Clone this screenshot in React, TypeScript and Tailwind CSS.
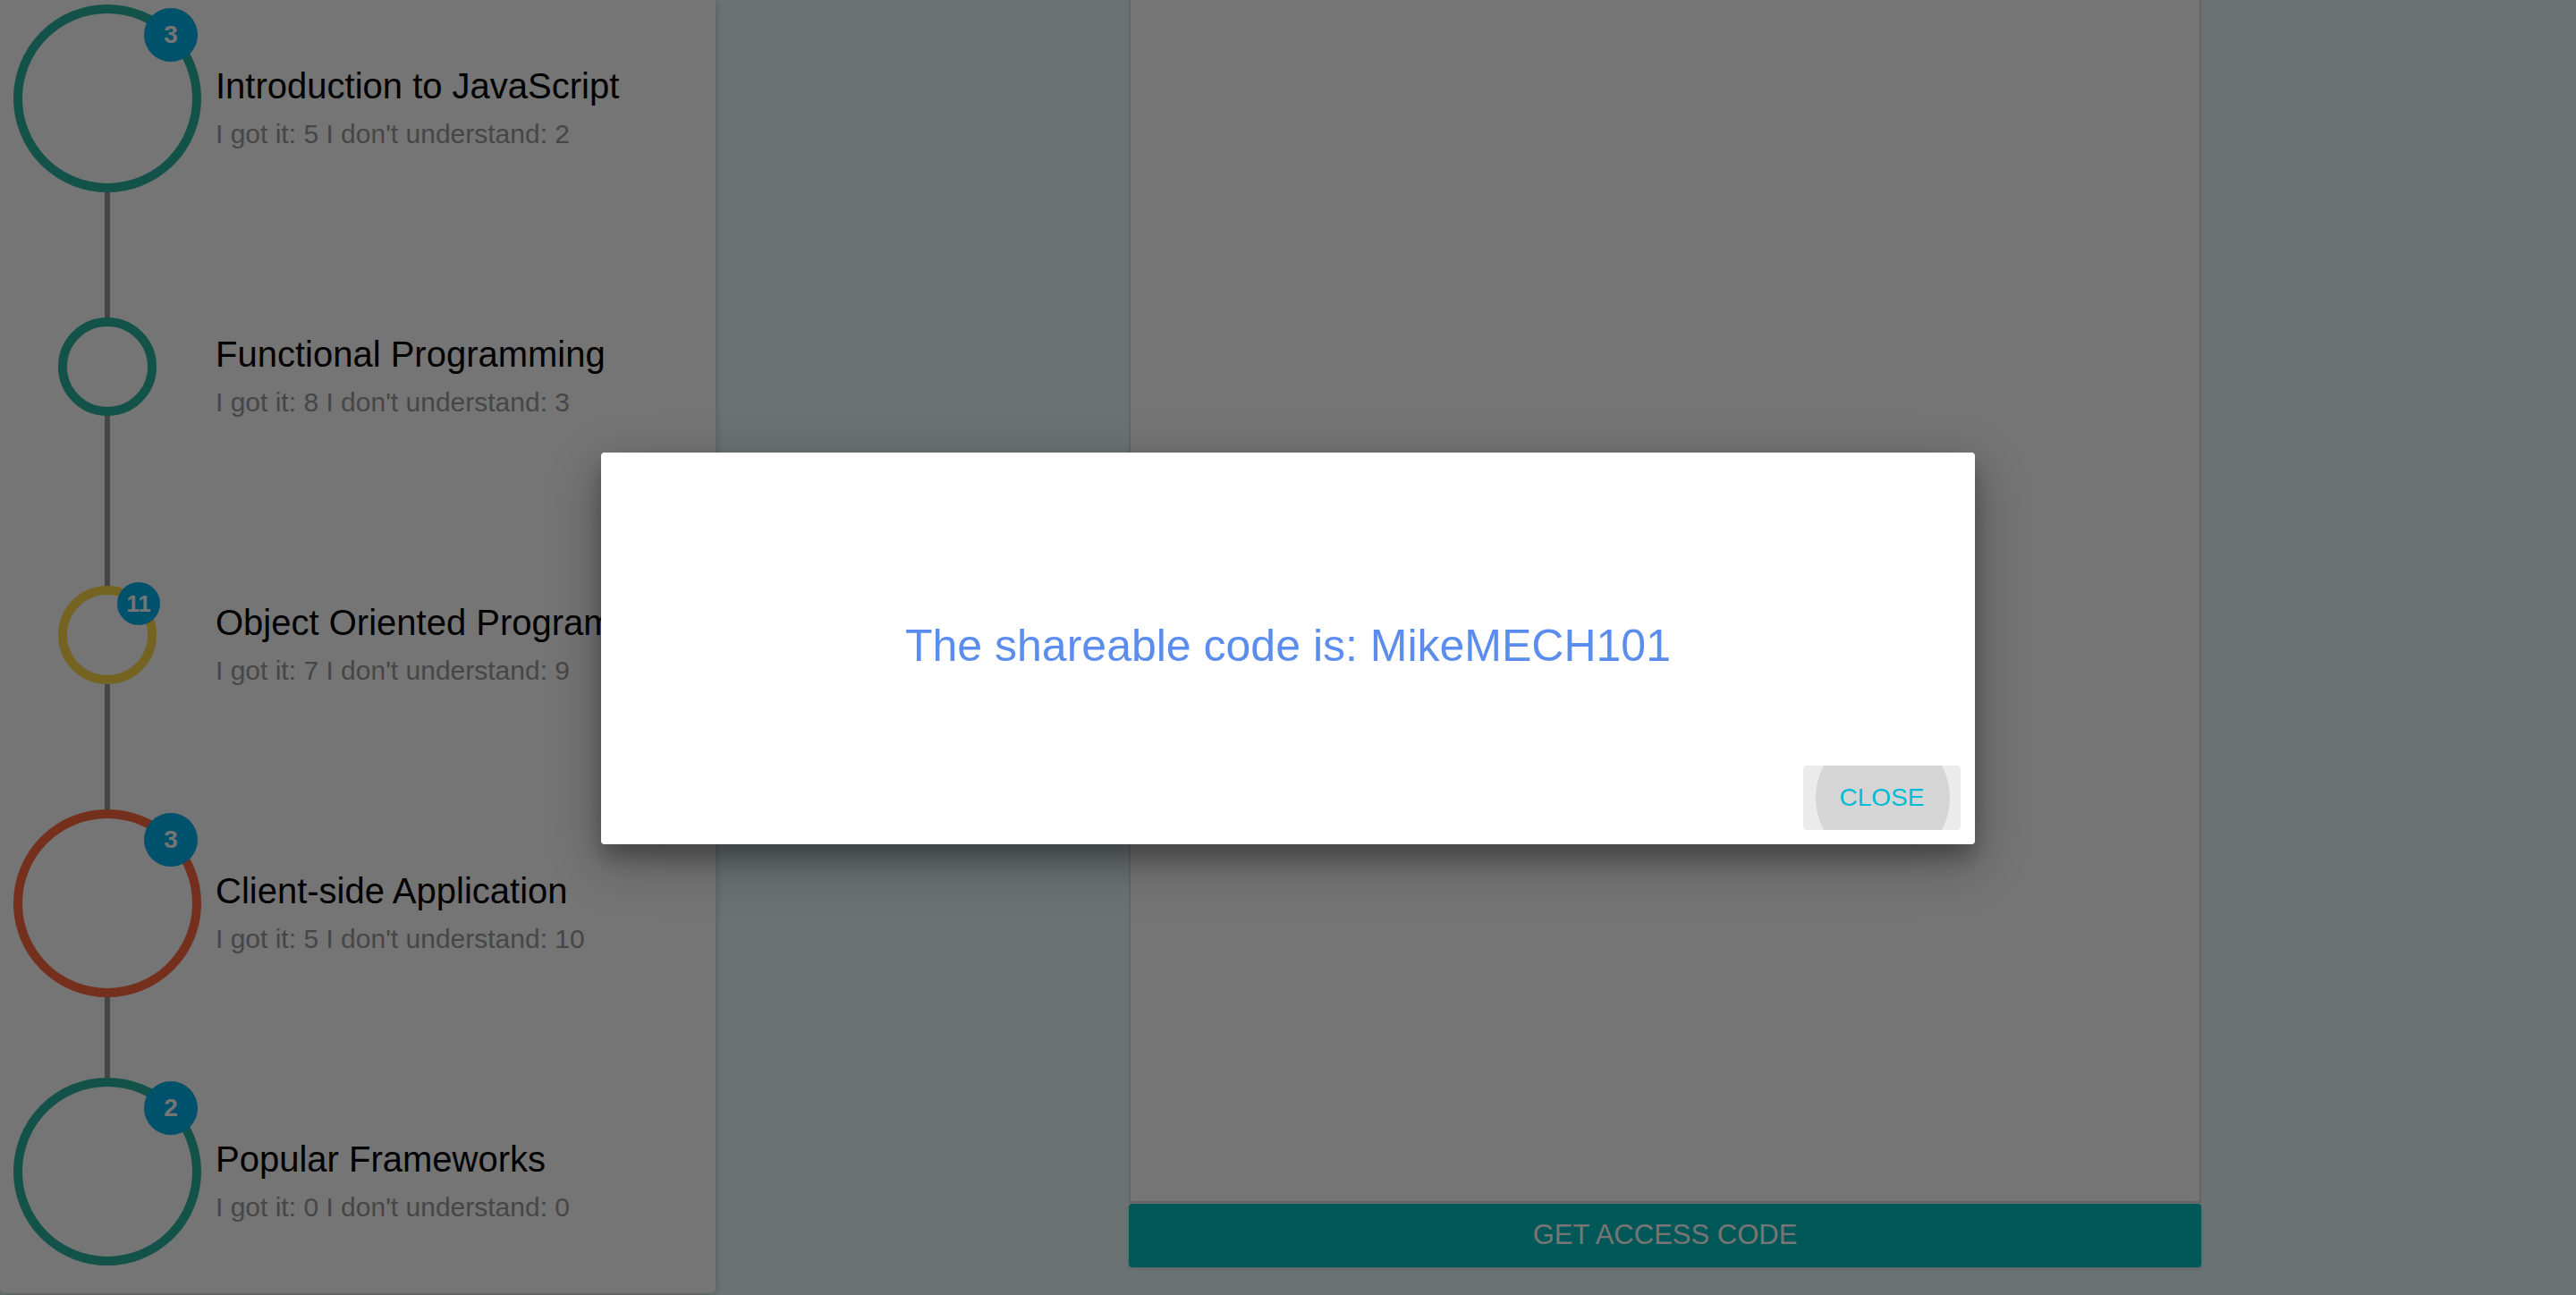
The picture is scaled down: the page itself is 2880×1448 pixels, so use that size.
import React from 'react'

type Topic = {
  title: string
  got: number
  lost: number
  big: boolean
  ring: string
  badge?: number
}

const topics: Topic[] = [
  { title: 'Introduction to JavaScript', got: 5, lost: 2, big: true, ring: 'border-[#28b2a0]', badge: 3 },
  { title: 'Functional Programming', got: 8, lost: 3, big: false, ring: 'border-[#28b2a0]' },
  { title: 'Object Oriented Programming', got: 7, lost: 9, big: false, ring: 'border-[#ffd848]', badge: 11 },
  { title: 'Client-side Application', got: 5, lost: 10, big: true, ring: 'border-[#ff6640]', badge: 3 },
  { title: 'Popular Frameworks', got: 0, lost: 0, big: true, ring: 'border-[#28b2a0]', badge: 2 },
]

function Node({ topic, first, last }: { topic: Topic; first: boolean; last: boolean }) {
  return (
    <div className="flex h-[300px] items-center">
      <div className="flex h-full w-[240px] shrink-0 flex-col items-center">
        <div className={`w-[6px] flex-1 ${first ? '' : 'bg-[#959595]'}`} />
        <div
          className={`relative rounded-full border-[10px] ${topic.ring} ${
            topic.big ? 'h-[210px] w-[210px]' : 'h-[110px] w-[110px]'
          }`}
        >
          {topic.badge !== undefined &&
            (topic.big ? (
              <span className="absolute left-[136px] top-[-6px] flex h-[60px] w-[60px] items-center justify-center rounded-full bg-[#00b0ec] text-[28px] font-bold text-white">
                {topic.badge}
              </span>
            ) : (
              <span className="absolute left-[56px] top-[-14px] flex h-[48px] w-[48px] items-center justify-center rounded-full bg-[#00b0ec] text-[26px] font-bold text-white">
                {topic.badge}
              </span>
            ))}
        </div>
        <div className={`w-[6px] flex-1 ${last ? '' : 'bg-[#959595]'}`} />
      </div>
      <div className="mt-[20px] flex flex-col whitespace-nowrap pl-[1px]">
        <p className="text-[40px] leading-[48px] text-black">{topic.title}</p>
        <p className="mt-3 text-[30px] leading-[36px] text-[#9a9a9a]">
          I got it: {topic.got} I don't understand: {topic.lost}
        </p>
      </div>
    </div>
  )
}

export default function App() {
  return (
    <div className="relative flex h-[1448px] w-[2880px] overflow-hidden bg-[#e8f8fa] font-['Liberation_Sans',Arial,sans-serif]">
      <aside className="h-[1446px] w-[800px] shrink-0 overflow-hidden rounded-b-[6px] bg-white shadow-[0_2px_10px_rgba(0,0,0,0.2)]">
        <div className="-mt-[40px]">
          {topics.map((t, i) => (
            <Node key={t.title} topic={t} first={i === 0} last={i === topics.length - 1} />
          ))}
        </div>
      </aside>

      <main className="ml-[462px] flex h-[1417px] w-[1199px] flex-col">
        <div className="flex-1 border-x-2 border-b-2 border-[#dddddd] bg-white" />
        <button className="mt-px flex h-[71px] items-center justify-center rounded-[4px] bg-[#00bebe] text-[31px] text-white shadow-[0_1px_4px_rgba(0,0,0,0.15)]">
          GET ACCESS CODE
        </button>
      </main>

      <div className="absolute inset-0 flex justify-center bg-black/[0.54] pt-[506px]">
        <div className="flex h-[438px] w-[1536px] flex-col rounded-[4px] bg-white shadow-[0_19px_60px_rgba(0,0,0,0.3),0_15px_20px_rgba(0,0,0,0.22)]">
          <div className="pb-[88px] pt-[186px] text-center text-[50px] leading-[60px] text-[#5b8def]">
            The shareable code is: MikeMECH101
          </div>
          <div className="flex flex-1 items-end justify-end p-4">
            <button className="relative flex h-[72px] w-[176px] items-center justify-center overflow-hidden rounded-[4px] bg-[#ebebeb]">
              <span className="absolute left-[14px] top-[-39px] h-[150px] w-[150px] rounded-full bg-[#d5d5d5]" />
              <span className="relative text-[28px] text-[#00bcd4]">CLOSE</span>
            </button>
          </div>
        </div>
      </div>
    </div>
  )
}
